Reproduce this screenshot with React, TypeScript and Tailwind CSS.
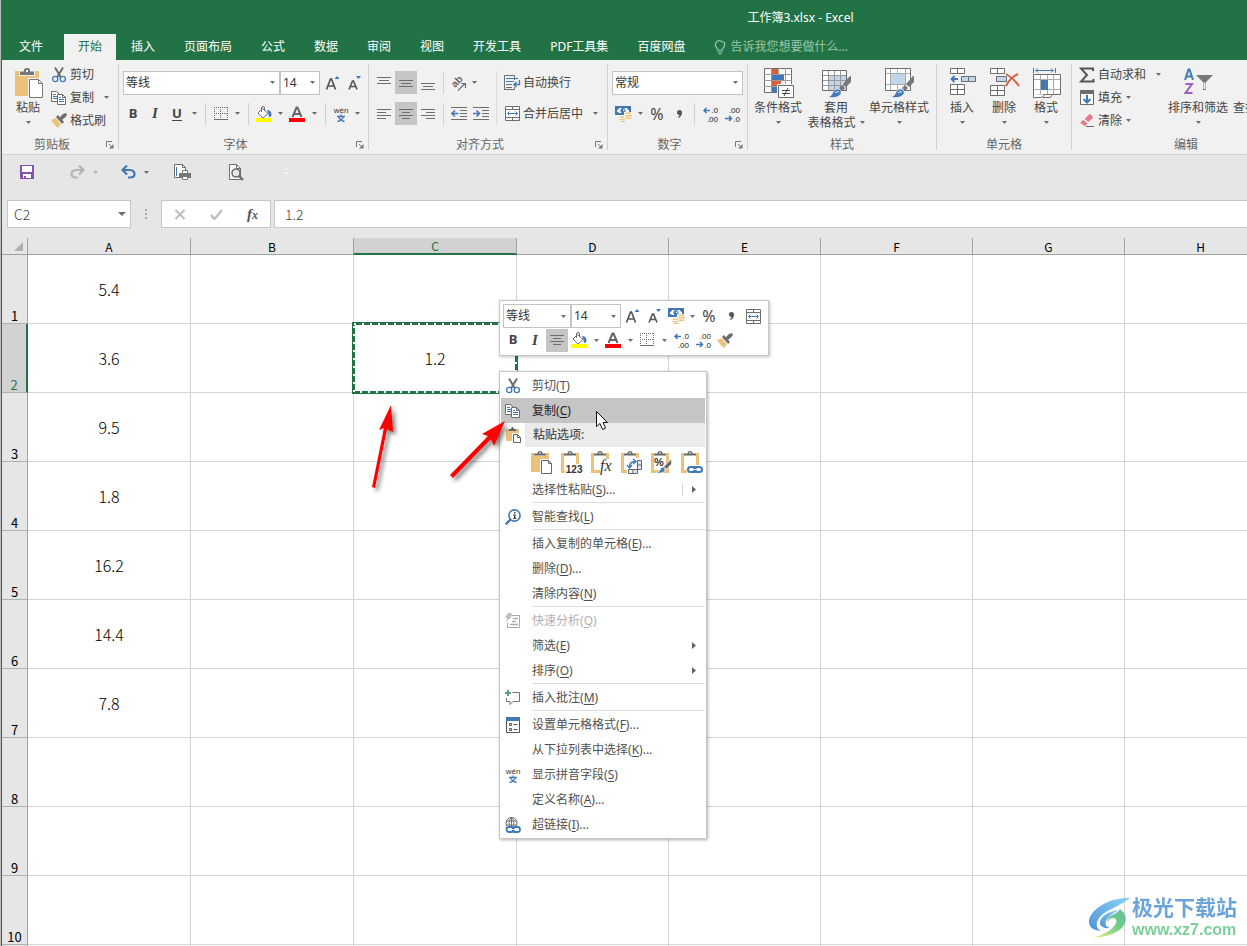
import React, { useState } from "react";

type Kids = { children?: React.ReactNode };

const GRAY = "#6d6d6d";
const BLUE = "#4178b5";
const TAN = "#ecc27b";

/* ---------- icons ---------- */

function Svg({ w, h, children }: { w: number; h: number } & Kids) {
  return (
    <svg width={w} height={h} viewBox={`0 0 ${w} ${h}`} fill="none" aria-hidden="true" className="shrink-0">
      {children}
    </svg>
  );
}

const Caret = ({ color = GRAY }: { color?: string }) => (
  <Svg w={5} h={3}>
    <path d="M0 0h5L2.500 3z" fill={color} />
  </Svg>
);

const PasteBig = () => (
  <Svg w={30} h={30}>
    <path d="M1 3h24v25H1z" fill={TAN} />
    <path d="M5 2h16v6H5z" fill="#f1f1f1" />
    <path d="M6 7V3.500h4V2q0-2 3-2t3 2v1.500h4V7z" fill="#777" />
    <path d="M12 2h2v2h-2z" fill="#f1f1f1" />
    <path d="M14 10h11l5 5v15H14z" fill="#f1f1f1" />
    <path d="M15.500 11.500h9l4 4v14h-13z" fill="#fff" stroke="#777" />
    <path d="M24.500 11.500v4h4" stroke="#777" />
  </Svg>
);

const Scissors = () => (
  <Svg w={16} h={16}>
    <path d="M4 .5l6 10M12 .5l-6 10" stroke={GRAY} strokeWidth="2" />
    <circle cx="4.200" cy="12" r="2.600" stroke={BLUE} strokeWidth="1.300" />
    <circle cx="11.800" cy="12" r="2.600" stroke={BLUE} strokeWidth="1.300" />
  </Svg>
);

const CopyIcon = () => (
  <Svg w={16} h={14}>
    <path d="M.5.5h5l3 3v7h-8z" fill="#fff" stroke={GRAY} />
    <path d="M2 3.500h3M2 5.500h4M2 7.500h4" stroke={BLUE} />
    <path d="M6.500 3.500h5l3 3v7h-8z" fill="#fff" stroke={GRAY} />
    <path d="M11.500 3.500v3h3" stroke={GRAY} />
    <path d="M8 6.500h2M8 8.500h5M8 10.500h5" stroke={BLUE} />
  </Svg>
);

const Brush = () => (
  <Svg w={16} h={15}>
    <path d="M0 7l5-2 5 6-3 4q-3-2-7-8z" fill={TAN} />
    <path d="M5 4l2-2 6 7-2 2z" fill={GRAY} />
    <path d="M8.500 4.500L12 1l3-1 1 2-1.500 2L11 7z" fill={GRAY} />
    <path d="M5.500 5.500l5 5.500" stroke="#f1f1f1" strokeWidth=".8" />
  </Svg>
);

const Launcher = () => (
  <Svg w={8} h={8}>
    <path d="M.5 6V.5H6M3 3l3 3" stroke="#777" />
    <path d="M7.500 3v4.500H3z" fill="#777" />
  </Svg>
);

const GrowFont = ({ down = false }: { down?: boolean }) => (
  <Svg w={16} h={16}>
    {down ? (
      <>
        <path d="M2 14.500L5.500 6h1L10 14.500M3.500 11.500h5" stroke="#555" strokeWidth="1.600" />
        <path d="M9 1h5l-2.500 3z" fill={BLUE} />
      </>
    ) : (
      <>
        <path d="M1.500 14.500L5.500 4h1l4 10.500M3 11h6" stroke="#555" strokeWidth="1.700" />
        <path d="M9.500 4h5L12 1z" fill={BLUE} />
      </>
    )}
  </Svg>
);

const Borders = () => (
  <Svg w={14} h={14}>
    <path
      d="M.5 0v12M13.500 0v12M6.500 0v12M0 .5h14M0 6.500h14"
      stroke={GRAY}
      strokeDasharray="1 1"
      shapeRendering="crispEdges"
    />
    <path d="M0 12.500h14" stroke={GRAY} shapeRendering="crispEdges" />
  </Svg>
);

const Bucket = () => (
  <Svg w={16} h={16}>
    <path d="M6.500 2.500l5.500 5L7 12 2 7z" fill="#fff" stroke={GRAY} />
    <path d="M5.500 6V2q0-1.500 1.500-1.500T8.500 2v3" stroke={GRAY} />
    <path d="M11 4q4 0 4.500 4 0 3-1.500 3-1.500 0-1.500-3z" fill={BLUE} />
    <path d="M0 12h16v4H0z" fill="#ff0" />
  </Svg>
);

const FontColor = () => (
  <Svg w={16} h={16}>
    <path d="M3.500 11L7.500 1.500h1l4 9.500M5 8h6" stroke="#666" strokeWidth="2" />
    <path d="M0 12h16v4H0z" fill="#f00" />
  </Svg>
);

const Wen = () => (
  <Svg w={18} h={18}>
    <text x="9" y="8" textAnchor="middle" fontSize="8" fill="#333" fontFamily="Liberation Sans">
      wén
    </text>
    <path d="M5 11.500h8M9 9.500v2M6.500 11.500q1.500 4 6 5M11.500 11.500q-1.500 4-6 5" stroke={BLUE} strokeWidth="1.300" />
  </Svg>
);

type AlignKind = "top" | "middle" | "bottom" | "left" | "center" | "right";
const ALIGN: Record<AlignKind, string> = {
  top: "M1 2.500h14M3 5.500h10M1 8.500h14",
  middle: "M1 5.500h14M3 8.500h10M1 11.500h14",
  bottom: "M1 8.500h14M3 11.500h10M1 14.500h14",
  left: "M1 3.500h14M1 6.500h9M1 9.500h14M1 12.500h9",
  center: "M1 3.500h14M4 6.500h8M1 9.500h14M4 12.500h8",
  right: "M1 3.500h14M6 6.500h9M1 9.500h14M6 12.500h9",
};
const Align = ({ kind }: { kind: AlignKind }) => (
  <Svg w={16} h={16}>
    <path d={ALIGN[kind]} stroke={GRAY} />
  </Svg>
);

const Orientation = () => (
  <Svg w={20} h={20}>
    <text x="7" y="15" transform="rotate(-45 7 15)" fontSize="10" fontWeight="700" fill="#666" fontFamily="Liberation Sans">
      ab
    </text>
    <path d="M10 17.500l7-7M13 10.500h4.500V15" stroke={GRAY} strokeWidth="1.200" />
  </Svg>
);

const Indent = ({ out = false }: { out?: boolean }) => (
  <Svg w={16} h={14}>
    <path d="M0 .5h16M9 3.500h7M9 6.500h7M9 9.500h7M0 12.500h16" stroke={GRAY} />
    {out ? (
      <path d="M7.500 6.500H1.500M4 3.500L1 6.500l3 3" stroke={BLUE} strokeWidth="1.600" />
    ) : (
      <path d="M0 6.500h6M3.500 3.500l3 3-3 3" stroke={BLUE} strokeWidth="1.600" />
    )}
  </Svg>
);

const WrapIcon = () => (
  <Svg w={17} h={16}>
    <path d="M.5 15V.5h10V5M.5 8.500v6h10V12" stroke={GRAY} />
    <path d="M2 3.500h12M2 6.500h8" stroke={BLUE} />
    <path d="M2 9.500h6M2 12.500h6" stroke={GRAY} />
    <path d="M15.500 5v4.500h-5M12.500 7l-2.500 2.500 2.500 2.500" stroke={BLUE} strokeWidth="1.300" />
  </Svg>
);

const MergeIcon = () => (
  <Svg w={15} h={15}>
    <path d="M.5.5h14v14H.5z" fill="#fff" stroke={GRAY} />
    <path d="M0 3.500h15M0 11.500h15M7.500 0v3.500M7.500 11.500V15" stroke={GRAY} />
    <path d="M2.500 7.500h10M4.500 5.500l-2 2 2 2M10.500 5.500l2 2-2 2" stroke={BLUE} />
  </Svg>
);

const Currency = () => (
  <Svg w={17} h={16}>
    <path d="M1 1h14v7H1z" fill="#fff" stroke={BLUE} strokeWidth="2" />
    <path d="M2 2h2v1H3v1H2zM12 2h2v2h-1V3h-1zM2 7V6h1.500v1z" fill={BLUE} />
    <circle cx="8" cy="4.500" r="2.600" fill={BLUE} />
    <path d="M8 3.500h1.500V5H8z" fill="#fff" />
    <path d="M9 6h8v8h-5v2H4v-6h5z" fill="#f8f8f8" />
    <path
      d="M10.500 6.500h5.500v1.500h-5.500zM10.500 9h6.500v1.500h-6.500zM10.500 11.500h6V13h-6zM5 10.500h4.500V12H5zM4.500 13h5.500v1H4.500zM5.500 14.800h5V16h-5z"
      fill={TAN}
    />
  </Svg>
);

const Decimal = ({ more = false }: { more?: boolean }) => (
  <Svg w={18} h={18}>
    <text x="17" y="8" textAnchor="end" fontSize="8" fill="#222" fontFamily="Liberation Sans">
      {more ? ".0" : ".00"}
    </text>
    <text x="17" y="17" textAnchor="end" fontSize="8" fill="#222" fontFamily="Liberation Sans">
      {more ? ".00" : ".0"}
    </text>
    {more ? (
      <path d="M9 5.500H3M5.500 3L3 5.500 5.500 8" stroke={BLUE} strokeWidth="1.500" />
    ) : (
      <path d="M2 13.500h6M6 11l2.500 2.500L6 16" stroke={BLUE} strokeWidth="1.500" />
    )}
  </Svg>
);

const CondFormat = () => (
  <Svg w={30} h={30}>
    <path d="M.5.500h27v24H.5z" fill="#fff" stroke={GRAY} />
    <path d="M0 6.500h28M0 12.500h28M0 18.500h28M7.500 0v25M14.500 0v25M21.500 0v25" stroke="#999" />
    <path d="M8 1h6v5H8zM8 13h9v5H8z" fill="#d9603b" />
    <path d="M8 7h12v5H8zM8 19h5v5H8z" fill={BLUE} />
    <path d="M13 16h17v14H13z" fill="#f1f1f1" />
    <path d="M14.500 17.500h15v12h-15z" fill="#fff" stroke={GRAY} />
    <path d="M18 22.500h8M18 25.500h8M24 20l-4 8" stroke="#444" />
  </Svg>
);

const PaintBrush = ({ x, y }: { x: number; y: number }) => (
  <g transform={`translate(${x} ${y})`}>
    <path d="M0 22q4-1 5-5 2-4 6-3 4 3 1 6-4 4-12 2z" fill={BLUE} stroke="#f1f1f1" strokeWidth=".8" />
    <path d="M11 13l3-3 3 3-3 3z" fill="#777" />
    <path d="M15 9l7-8 1 0v6l-5 5z" fill="#777" />
    <path d="M7 18q2-2 4-1" stroke="#fff" />
  </g>
);

const TableFormat = () => (
  <Svg w={30} h={30}>
    <path d="M.5 2.500h24v20H.5z" fill="#fff" stroke={GRAY} />
    <path d="M7 8h17v14H7z" fill="#c3d5ea" />
    <path d="M1 7.500h23M1 12.500h23M1 17.500h23M6.500 3v19M12.500 3v19M18.500 3v19" stroke="#999" />
    <PaintBrush x={6} y={7} />
  </Svg>
);

const CellStyle = () => (
  <Svg w={30} h={30}>
    <path d="M.5.500h25v22H.5z" fill="#fff" stroke={GRAY} />
    <path d="M1 5.500h24M1 16.500h24M5.500 1v21M20.500 1v21M12.500 1v4M12.500 17v5" stroke="#aaa" />
    <path d="M6 6h14v10H6z" fill="#c3d5ea" />
    <PaintBrush x={6} y={7} />
  </Svg>
);

const InsertCells = () => (
  <Svg w={28} h={30}>
    <path d="M1.500.500h14v5h-14zM8.500.500v5M1.500 16.500h14v10h-14zM8.500 16.500v10M1.500 21.500h14" fill="#fff" stroke={GRAY} />
    <path d="M12.500 8.500h14v5h-14zM19.500 8.500v5" fill="#c3d5ea" stroke={GRAY} />
    <path d="M9 11H3M5.500 8L2.500 11l3 3" stroke={BLUE} strokeWidth="1.800" />
  </Svg>
);

const DeleteCells = () => (
  <Svg w={30} h={30}>
    <path d="M.5.500h14v5H.5zM7.500.500v5M.5 17.500h14v10H.5zM7.500 17.500v10M.5 22.500h14" fill="#fff" stroke={GRAY} />
    <path d="M6.500 8.500h10v5h-10z" fill="#c3d5ea" stroke={GRAY} />
    <path d="M16 6q7 4 13 12M28 6q-8 4-12 12" stroke="#d9603b" strokeWidth="2" />
  </Svg>
);

const FormatCells = () => (
  <Svg w={28} h={32}>
    <path d="M.5 0v5M22.500 0v5M2 2.500h19M5 .5l-2 2 2 2M18 .5l2 2-2 2" stroke={BLUE} />
    <path d="M.5 6.500h27v20H.5z" fill="#fff" stroke={GRAY} />
    <path d="M1 11.500h26M1 21.500h26M7.500 7v19M14.500 7v19M20.500 7v19" stroke="#aaa" />
    <path d="M8 12h7v10H8z" fill={BLUE} />
    <path d="M.5 26v3.500h7q3 0 4-3M10 29.500h6q3 0 3-3" fill="#fff" stroke={GRAY} />
  </Svg>
);

const Sigma = () => (
  <Svg w={16} h={16}>
    <path d="M14 4V1.500H2L8 8l-6 6.500h12.500V12" stroke="#555" strokeWidth="2" />
  </Svg>
);

const FillDown = () => (
  <Svg w={14} h={16}>
    <path d="M.5.500h13v14H.5z" fill="#fff" stroke={GRAY} />
    <path d="M0 0h14v4H0z" fill={GRAY} />
    <path d="M7 5v7M3.500 9L7 12.500 10.500 9" stroke={BLUE} strokeWidth="2" />
  </Svg>
);

const Eraser = () => (
  <Svg w={14} h={14}>
    <path d="M4.500 5L9 .5q1-.8 2 0l1.500 2q.5 1 0 2L8.500 8z" fill="#e8798e" />
    <path d="M3.500 6l4 3.500L6 11.500q-1 1-2 0l-3-2q-1-1 0-2z" fill="#e8798e" />
    <path d="M6 12.500h8" stroke={GRAY} />
  </Svg>
);

const SortFilter = () => (
  <Svg w={30} h={28}>
    <path d="M1 12L4.500 1.500h1L9 12M2 8.500h6" stroke={BLUE} strokeWidth="2" />
    <path d="M1.500 16H8L1.500 25H8.500" stroke="#9b5fc0" strokeWidth="2" />
    <path d="M12 7h17l-7 7v8h-3v-8z" fill="#777" />
    <path d="M19.500 14.500h2V21h-2z" fill="#f1f1f1" />
  </Svg>
);

const FindIcon = () => (
  <Svg w={30} h={28}>
    <circle cx="18" cy="10" r="8" stroke={BLUE} strokeWidth="2" />
    <path d="M12 16l-9 9" stroke={GRAY} strokeWidth="3" />
  </Svg>
);

const Bulb = () => (
  <Svg w={12} h={15}>
    <path d="M3.500 10q0-1.500-1.500-3Q.5 4 2.500 2T6 .7 9.500 2 10 7q-1.500 1.500-1.500 3z" stroke="#9cc7ab" strokeWidth="1.200" />
    <path d="M3.500 12h5M4.500 14h3" stroke="#9cc7ab" strokeWidth="1.200" />
  </Svg>
);

const SaveIcon = () => (
  <Svg w={14} h={14}>
    <path d="M0 0h14v14H0z" fill="#8653ab" />
    <path d="M2 1h10v6H2zM3 9h8v4H3z" fill="#fff" />
    <path d="M4 11h2v2H4z" fill="#8653ab" />
  </Svg>
);

const Turn = ({ color, flip = false }: { color: string; flip?: boolean }) => (
  <Svg w={15} h={14}>
    <g transform={flip ? "translate(15 0) scale(-1 1)" : undefined}>
      <path d="M1.500 5H9q4.500.5 4.500 4T9 12.500H7" stroke={color} strokeWidth="2.200" />
      <path d="M6 .5L1.500 5 6 9.500" stroke={color} strokeWidth="2.200" />
    </g>
  </Svg>
);

const QuickPrint = () => (
  <Svg w={17} h={17}>
    <path d="M5 13.500H.5V.5h8l3 3V6" fill="#fff" stroke={GRAY} />
    <path d="M2.500 12V3" stroke={BLUE} />
    <path d="M8.500.5v3h3" stroke={GRAY} />
    <path d="M5 9h12v5H5z" fill="#777" />
    <path d="M8.500 6.500h5v3h-5zM8.500 12.500h5v3h-5z" fill="#fff" stroke="#777" />
  </Svg>
);

const Preview = () => (
  <Svg w={15} h={17}>
    <path d="M.5.5h7l4 4v11H.5z" fill="#fff" stroke={GRAY} />
    <path d="M7.500.5v4h4" stroke={GRAY} />
    <circle cx="7" cy="9" r="4" fill="#e6e6e6" stroke={GRAY} strokeWidth="1.600" />
    <path d="M10 12l4 4" stroke={GRAY} strokeWidth="2.400" />
  </Svg>
);

const PasteSmall = () => (
  <Svg w={16} h={16}>
    <path d="M1 2h13v12H1z" fill={TAN} />
    <path d="M3 1h9v3H3z" fill="#fff" />
    <path d="M3.500 4V2h2.500q0-2 1.500-2T9 2h2.500v2z" fill="#666" />
    <path d="M7 6h6l3 3v7H7z" fill="#fff" />
    <path d="M8.500 7.500h4l3 3v5h-7zM12.500 7.500v3h3" fill="#fff" stroke="#666" />
  </Svg>
);

type PasteKind = "all" | "values" | "formula" | "transpose" | "format" | "link";
function PasteOption({ kind }: { kind: PasteKind }) {
  return (
    <Svg w={22} h={24}>
      {kind === "all" ? (
        <path d="M0 2h18v19H0z" fill={TAN} />
      ) : (
        <path d="M1.500 3.500h15v17h-15z" fill="#fff" stroke={TAN} strokeWidth="3" />
      )}
      <path d="M3 1h12v4H3z" fill="#fff" />
      <path d="M3 4.500V2.500h3.500Q6.500 0 9 0t2.500 2.500H15v2z" fill="#666" />
      <path d="M8 1.500h2v1H8z" fill="#fff" />
      {kind === "all" && (
        <>
          <path d="M9 8h8l4 4v12H9z" fill="#fff" />
          <path d="M10.500 9.500h7l3 3v10h-10zM17.500 9.500v3h3" fill="#fff" stroke="#666" />
        </>
      )}
      {kind === "values" && (
        <>
          <path d="M4 13h18v11H4z" fill="#fff" />
          <text x="21.500" y="21.500" textAnchor="end" fontSize="10" fontWeight="700" fill="#333" fontFamily="Liberation Sans">
            123
          </text>
        </>
      )}
      {kind === "formula" && (
        <>
          <path d="M9 8h13v16H9z" fill="#fff" />
          <text x="9" y="20" fontSize="16" fontStyle="italic" fill="#333" fontFamily="Liberation Serif">
            fx
          </text>
        </>
      )}
      {kind === "transpose" && (
        <>
          <path d="M6 7h15v17H6z" fill="#fff" />
          <path d="M16.500 9.500h4v9h-4zM16.500 14h4M7.500 18.500h9v4h-9zM12 18.500v4" fill="#dde8f4" stroke="#666" />
          <path d="M8.500 16q0-5.500 5.500-5.500M6 14l2.500 3 2.500-3M12 8l3 2.500-3 2.500" stroke={BLUE} strokeWidth="1.400" />
        </>
      )}
      {kind === "format" && (
        <>
          <path d="M4 6h11v10H4z" fill="#fff" />
          <text x="3" y="15" fontSize="11" fontWeight="700" fill="#333" fontFamily="Liberation Sans">
            %
          </text>
          <path d="M5 22q4-1 5-5 2-2 4 0 1 6-9 5z" fill={BLUE} stroke="#fff" strokeWidth=".6" />
          <path d="M12.500 16l8-8v5l-5 5z" fill="#666" stroke="#fff" strokeWidth=".6" />
        </>
      )}
      {kind === "link" && (
        <>
          <path d="M6 14h16v10H6z" fill="#fff" />
          <rect x="7" y="16" width="8" height="5" rx="2.500" stroke={BLUE} strokeWidth="2" />
          <rect x="13" y="16" width="8" height="5" rx="2.500" stroke={BLUE} strokeWidth="2" />
          <path d="M11 18.500h6" stroke="#fff" strokeWidth="1" />
        </>
      )}
    </Svg>
  );
}

const SmartLookup = () => (
  <Svg w={16} h={16}>
    <circle cx="9.500" cy="6.500" r="5.600" fill="#fff" stroke={BLUE} strokeWidth="1.600" />
    <path d="M5.500 10.500L.8 15.200" stroke={BLUE} strokeWidth="2.400" />
    <path d="M9 3h1.500v1.500H9zM8 5.500h2.500V9h1v1H8V9h1V6.500H8z" fill="#444" />
  </Svg>
);

const QuickAnalysis = () => (
  <Svg w={16} h={16}>
    <path d="M5.500 2.500h9v12h-12v-5" stroke="#aaa" />
    <path d="M8 5.500h5M7 8.500h4M5 11.500h8" stroke="#aaa" strokeWidth="1.500" />
    <path d="M3 0h4L5 3.500h2L1 9l1.500-4H0z" fill="#bbb" />
  </Svg>
);

const Comment = () => (
  <Svg w={16} h={16}>
    <path d="M7.500 2.500h7v9H8l-3 3v-3H1.500V8" stroke="#777" />
    <path d="M3 0v6M0 3h6" stroke="#5b9c86" strokeWidth="2" />
  </Svg>
);

const FormatDialog = () => (
  <Svg w={14} h={16}>
    <path d="M.5.500h13v15H.5z" fill="#fff" stroke="#555" />
    <path d="M0 0h14v4H0z" fill={BLUE} />
    <path d="M3.500 6.500h2v2h-2zM3.500 11.500h2v2h-2z" stroke="#555" />
    <path d="M7.500 7.500h4M7.500 12.500h4" stroke="#555" />
  </Svg>
);

const Hyperlink = () => (
  <Svg w={16} h={16}>
    <circle cx="6.500" cy="6" r="5.500" stroke="#666" />
    <path d="M6.500.5v11M1 4h11M1 8h11M6.500.5q-5 5 0 11M6.500.5q5 5 0 11" stroke="#666" strokeWidth=".9" />
    <path d="M1 9h15v7H1z" fill="#fff" />
    <rect x="1.500" y="10" width="7.500" height="5" rx="2.500" stroke={BLUE} strokeWidth="1.800" />
    <rect x="7.500" y="10" width="7.500" height="5" rx="2.500" stroke={BLUE} strokeWidth="1.800" />
    <path d="M5 12.500h6" stroke="#fff" />
  </Svg>
);

/* ---------- ribbon parts ---------- */

function IconButton({
  label,
  active = false,
  width = "w-[22px]",
  children,
}: { label: string; active?: boolean; width?: string } & Kids) {
  return (
    <button
      type="button"
      aria-label={label}
      className={`flex h-[23px] shrink-0 items-center justify-center ${width} ${active ? "bg-[#c5c5c5]" : ""}`}
    >
      {children}
    </button>
  );
}

const CaretButton = ({ label }: { label: string }) => (
  <IconButton label={label} width="w-3">
    <Caret />
  </IconButton>
);

const Sep = ({ className = "mx-[5px]" }: { className?: string }) => (
  <span className={`h-[22px] w-px shrink-0 bg-[#d0d0d0] ${className}`} />
);

function Combo({ label, options, width }: { label: string; options: string[]; width: string }) {
  return (
    <div className={`grid h-6 shrink-0 items-center ${width}`}>
      <select
        aria-label={label}
        className="col-start-1 row-start-1 h-6 w-full appearance-none border border-[#c3c3c3] bg-white pl-0.5 text-[12px] text-[#333] outline-none"
      >
        {options.map((o) => (
          <option key={o}>{o}</option>
        ))}
      </select>
      <span className="pointer-events-none col-start-1 row-start-1 mr-[5px] justify-self-end">
        <Caret />
      </span>
    </div>
  );
}

function Group({
  title,
  width,
  launcher = false,
  children,
}: { title: string; width: string; launcher?: boolean } & Kids) {
  return (
    <section className={`flex shrink-0 ${width}`} aria-label={title}>
      <div className="flex min-w-0 flex-1 flex-col">
        <div className="flex h-[76px] items-start">{children}</div>
        <div className="flex h-[18px] items-center">
          <span className="flex-1 text-center text-[12px] leading-[18px] text-[#666]">{title}</span>
          {launcher && (
            <button type="button" aria-label={`${title}设置`} className="flex h-4 w-4 items-center justify-center">
              <Launcher />
            </button>
          )}
        </div>
      </div>
      <span className="my-1 w-px shrink-0 bg-[#d0d0d0]" />
    </section>
  );
}

function BigButton({
  icon,
  text,
  second,
  width,
}: {
  icon: React.ReactNode;
  text: string;
  second?: string;
  width: string;
}) {
  return (
    <button type="button" className={`flex shrink-0 flex-col items-center text-[12px] leading-[15px] text-[#444] ${width}`}>
      <span className="flex h-8 items-start justify-center pl-0.5">{icon}</span>
      <span className="whitespace-nowrap">{text}</span>
      <span className="flex h-[15px] items-center gap-1 whitespace-nowrap">
        {second}
        <Caret />
      </span>
    </button>
  );
}

function SmallButton({
  icon,
  text,
  caret = "none",
}: {
  icon: React.ReactNode;
  text: string;
  caret?: "none" | "near" | "far";
}) {
  return (
    <button type="button" className="flex h-[23px] items-center text-[12px] whitespace-nowrap text-[#444]">
      <span className="mr-0.5 flex w-[18px] justify-center">{icon}</span>
      {text}
      {caret !== "none" && (
        <span className={caret === "near" ? "ml-1" : "ml-2.5"}>
          <Caret />
        </span>
      )}
    </button>
  );
}

const Bold = () => <span className="text-[13px] font-bold text-[#444]">B</span>;
const Italic = () => (
  <span className="font-['Liberation_Serif',serif] text-[15px] font-bold text-[#444] italic">I</span>
);
const Percent = () => <span className="text-[16px] text-[#444]">%</span>;
const Comma = () => (
  <Svg w={5} h={8}>
    <path d="M0 2.500a2.500 2.500 0 0 1 5 0Q5 6 1.500 8L1 7q1.500-1 1.500-2Q0 5 0 2.500z" fill="#555" />
  </Svg>
);

function Ribbon() {
  return (
    <div className="flex overflow-hidden border-b border-[#d4d4d4] bg-[#f1f1f1]">
      <Group title="剪贴板" width="w-[117px]" launcher>
        <div className="flex pl-2.5">
          <div className="pt-2">
            <BigButton icon={<PasteBig />} text="粘贴" width="w-[32px]" />
          </div>
          <div className="flex flex-col items-start pt-[3px] pl-1.5">
            <SmallButton icon={<Scissors />} text="剪切" />
            <SmallButton icon={<CopyIcon />} text="复制" caret="far" />
            <SmallButton icon={<Brush />} text="格式刷" />
          </div>
        </div>
      </Group>

      <Group title="字体" width="w-[250px]" launcher>
        <div className="flex flex-col gap-2 pt-[11px] pl-[3px]">
          <div className="flex h-[23px] items-center pl-px">
            <Combo label="字体" options={["等线", "宋体"]} width="w-[157px]" />
            <Combo label="字号" options={["14", "12", "11"]} width="w-[40px]" />
            <span className="ml-0.5 flex">
              <IconButton label="增大字号">
                <GrowFont />
              </IconButton>
              <IconButton label="减小字号">
                <GrowFont down />
              </IconButton>
            </span>
          </div>
          <div className="flex h-[23px] items-center">
            <IconButton label="加粗">
              <Bold />
            </IconButton>
            <IconButton label="倾斜">
              <Italic />
            </IconButton>
            <IconButton label="下划线">
              <span className="border-b border-[#444] text-[13px] leading-[13px] font-bold text-[#444]">U</span>
            </IconButton>
            <CaretButton label="下划线选项" />
            <Sep />
            <IconButton label="边框" width="w-[20px]">
              <Borders />
            </IconButton>
            <CaretButton label="边框选项" />
            <Sep />
            <IconButton label="填充颜色" width="w-[20px]">
              <Bucket />
            </IconButton>
            <CaretButton label="填充颜色选项" />
            <IconButton label="字体颜色">
              <FontColor />
            </IconButton>
            <CaretButton label="字体颜色选项" />
            <Sep />
            <IconButton label="拼音" width="w-[20px]">
              <Wen />
            </IconButton>
            <CaretButton label="拼音选项" />
          </div>
        </div>
      </Group>

      <Group title="对齐方式" width="w-[239px]" launcher>
        <div className="flex pt-[11px] pl-1">
          <div className="flex flex-col gap-2">
            <div className="flex items-center">
              <IconButton label="顶端对齐">
                <Align kind="top" />
              </IconButton>
              <IconButton label="垂直居中" active>
                <Align kind="middle" />
              </IconButton>
              <IconButton label="底端对齐">
                <Align kind="bottom" />
              </IconButton>
              <Sep className="mx-1" />
              <IconButton label="方向" width="w-[20px]">
                <Orientation />
              </IconButton>
              <CaretButton label="方向选项" />
            </div>
            <div className="flex items-center">
              <IconButton label="左对齐">
                <Align kind="left" />
              </IconButton>
              <IconButton label="居中" active>
                <Align kind="center" />
              </IconButton>
              <IconButton label="右对齐">
                <Align kind="right" />
              </IconButton>
              <Sep className="mx-1" />
              <IconButton label="减少缩进量">
                <Indent out />
              </IconButton>
              <IconButton label="增加缩进量">
                <Indent />
              </IconButton>
            </div>
          </div>
          <span className="ml-1 w-px bg-[#dcdcdc]" />
          <div className="flex flex-col items-start gap-2 pl-1.5">
            <SmallButton icon={<WrapIcon />} text="自动换行" />
            <SmallButton icon={<MergeIcon />} text="合并后居中" caret="far" />
          </div>
        </div>
      </Group>

      <Group title="数字" width="w-[140px]" launcher>
        <div className="flex flex-col gap-2 pt-[11px] pl-1">
          <div className="flex h-[23px] items-center">
            <Combo label="数字格式" options={["常规", "数值"]} width="w-[131px]" />
          </div>
          <div className="flex items-center">
            <IconButton label="会计数字格式">
              <Currency />
            </IconButton>
            <CaretButton label="会计数字格式选项" />
            <IconButton label="百分比样式">
              <Percent />
            </IconButton>
            <IconButton label="千位分隔样式">
              <Comma />
            </IconButton>
            <Sep className="mx-1" />
            <IconButton label="增加小数位数">
              <Decimal more />
            </IconButton>
            <IconButton label="减少小数位数">
              <Decimal />
            </IconButton>
          </div>
        </div>
      </Group>

      <Group title="样式" width="w-[189px]">
        <div className="flex pt-2 pl-1">
          <BigButton icon={<CondFormat />} text="条件格式" width="w-[52px]" />
          <BigButton icon={<TableFormat />} text="套用" second="表格格式" width="w-[64px]" />
          <BigButton icon={<CellStyle />} text="单元格样式" width="w-[62px]" />
        </div>
      </Group>

      <Group title="单元格" width="w-[135px]">
        <div className="flex pt-2 pl-1">
          <BigButton icon={<InsertCells />} text="插入" width="w-[42px]" />
          <BigButton icon={<DeleteCells />} text="删除" width="w-[42px]" />
          <BigButton icon={<FormatCells />} text="格式" width="w-[42px]" />
        </div>
      </Group>

      <Group title="编辑" width="w-[229px]">
        <div className="flex pl-1.5">
          <div className="flex w-[88px] flex-col items-start pt-[3px]">
            <SmallButton icon={<Sigma />} text="自动求和" caret="far" />
            <SmallButton icon={<FillDown />} text="填充" caret="near" />
            <SmallButton icon={<Eraser />} text="清除" caret="near" />
          </div>
          <div className="flex pt-2">
            <BigButton icon={<SortFilter />} text="排序和筛选" width="w-[64px]" />
            <BigButton icon={<FindIcon />} text="查找和选择" width="w-[66px]" />
          </div>
        </div>
      </Group>
    </div>
  );
}

const TABS = ["开始", "插入", "页面布局", "公式", "数据", "审阅", "视图", "开发工具", "PDF工具集", "百度网盘"];

function TitleBar() {
  return (
    <header className="bg-[#217346] text-[12px] text-white">
      <h1 className="h-[34px] pl-[352px] text-center text-[12px] leading-9 font-normal">工作簿3.xlsx - Excel</h1>
      <nav className="flex h-[26px] items-stretch gap-px leading-6 whitespace-nowrap" aria-label="功能区">
        <button type="button" className="mr-[3px] w-[58px]">
          文件
        </button>
        {TABS.map((t) => (
          <button
            key={t}
            type="button"
            className={t === "开始" ? "bg-[#f1f1f1] px-3.5 text-[#217346]" : "px-3.5"}
          >
            {t}
          </button>
        ))}
        <label className="flex flex-1 items-center gap-1 pl-3.5">
          <Bulb />
          <input
            type="text"
            aria-label="操作说明搜索"
            placeholder="告诉我您想要做什么..."
            className="w-40 bg-transparent outline-none placeholder:text-[#9cc7ab]"
          />
        </label>
      </nav>
    </header>
  );
}

function QuickAccess() {
  return (
    <div className="flex h-[34px] items-center pl-3.5">
      <IconButton label="保存">
        <SaveIcon />
      </IconButton>
      <span className="ml-7 flex items-center">
        <IconButton label="恢复">
          <Turn color="#b4b4b4" flip />
        </IconButton>
        <IconButton label="恢复选项" width="w-[15px]">
          <Caret color="#b4b4b4" />
        </IconButton>
      </span>
      <span className="ml-[14px] flex items-center">
        <IconButton label="撤消">
          <Turn color={BLUE} />
        </IconButton>
        <IconButton label="撤消选项" width="w-[15px]">
          <Caret />
        </IconButton>
      </span>
      <span className="ml-[17px] flex items-center gap-8">
        <IconButton label="快速打印">
          <QuickPrint />
        </IconButton>
        <IconButton label="打印预览">
          <Preview />
        </IconButton>
      </span>
      <span className="ml-7 flex">
        <IconButton label="自定义快速访问工具栏">
          <Svg w={5} h={6}>
            <path d="M0 .5h5" stroke="#f6f6f6" />
            <path d="M0 3h5L2.500 6z" fill="#f6f6f6" />
          </Svg>
        </IconButton>
      </span>
    </div>
  );
}

function FormulaBar() {
  return (
    <div className="flex h-7 items-stretch pl-[5px] font-['Noto_Sans_CJK_SC',sans-serif] text-[14px] font-light text-[#444]">
      <div className="flex w-[124px] shrink-0 items-center border border-[#c6c6c6] bg-white pr-1">
        <input aria-label="名称框" defaultValue="C2" className="min-w-0 flex-1 pl-1.5 outline-none" />
        <Svg w={8} h={4}>
          <path d="M0 0h8L4 4z" fill={GRAY} />
        </Svg>
      </div>
      <div className="flex w-[30px] shrink-0 items-center justify-center">
        <Svg w={2} h={11}>
          <path d="M0 0h2v2H0zM0 4h2v2H0zM0 8h2v2H0z" fill="#aaa" />
        </Svg>
      </div>
      <div className="flex w-[110px] shrink-0 items-center justify-around border border-[#c6c6c6] bg-white">
        <button type="button" aria-label="取消">
          <Svg w={12} h={11}>
            <path d="M1.500 1l9 9M10.500 1l-9 9" stroke="#bdbdbd" strokeWidth="2" />
          </Svg>
        </button>
        <button type="button" aria-label="输入">
          <Svg w={13} h={11}>
            <path d="M1 6l3.500 4L12 1" stroke="#bdbdbd" strokeWidth="2.400" />
          </Svg>
        </button>
        <button
          type="button"
          aria-label="插入函数"
          className="font-['Liberation_Serif',serif] text-[15px] leading-4 font-bold text-[#555] italic"
        >
          f<span className="text-[12px]">x</span>
        </button>
      </div>
      <input
        aria-label="编辑栏"
        defaultValue="1.2"
        className="ml-[3px] min-w-0 flex-1 border border-r-0 border-[#c6c6c6] bg-white pl-2.5 outline-none"
      />
    </div>
  );
}

/* ---------- worksheet ---------- */

const COLUMNS = ["A", "B", "C", "D", "E", "F", "G", "H", "I"];
const COLUMN_A = ["5.4", "3.6", "9.5", "1.8", "16.2", "14.4", "7.8", "", "", "", ""];

function Sheet() {
  return (
    <table className="w-[1427px] table-fixed border-separate border-spacing-0 font-['Noto_Sans_CJK_SC',sans-serif] font-light text-black">
      <colgroup>
        <col className="w-[26px]" />
        {COLUMNS.map((c, i) => (
          <col key={c} className={i < 3 ? "w-[163px]" : "w-[152px]"} />
        ))}
      </colgroup>
      <thead>
        <tr className="h-[17px] text-[12px] leading-[14px]">
          <th className="border-r border-b border-[#a0a0a0] bg-[#e6e6e6] p-0">
            <span className="flex justify-end pr-1">
              <Svg w={9} h={9}>
                <path d="M9 0v9H0z" fill="#b1b1b1" />
              </Svg>
            </span>
          </th>
          {COLUMNS.map((c) => (
            <th
              key={c}
              scope="col"
              className={
                c === "C"
                  ? "border-r border-b-2 border-r-[#a0a0a0] border-b-[#217346] bg-[#d2d2d2] p-0 pt-px font-normal text-[#217346]"
                  : "border-r border-b border-[#a0a0a0] bg-[#e6e6e6] p-0 pt-px font-normal"
              }
            >
              {c}
            </th>
          ))}
        </tr>
      </thead>
      <tbody>
        {COLUMN_A.map((value, r) => (
          <tr key={r} className="h-[69px]">
            <th
              scope="row"
              className={
                r === 1
                  ? "border-r-2 border-b border-r-[#217346] border-b-[#b1b1b1] bg-[#d2d2d2] p-0 align-bottom text-[13px] leading-[14px] font-normal text-[#217346]"
                  : "border-r border-b border-r-[#a0a0a0] border-b-[#b1b1b1] bg-[#e6e6e6] p-0 align-bottom text-[13px] leading-[14px] font-normal"
              }
            >
              {r + 1}
            </th>
            {COLUMNS.map((c) => (
              <td key={c} className="relative border-r border-b border-[#d4d4d4] p-0 text-center text-[16px] leading-5">
                {c === "A" ? value : c === "C" && r === 1 ? "1.2" : ""}
                {c === "C" && r === 1 && (
                  <svg
                    className="absolute -top-0.5 -left-0.5 z-10"
                    width="166"
                    height="72"
                    fill="none"
                    shapeRendering="crispEdges"
                    aria-hidden="true"
                  >
                    <rect x="1.500" y="1.500" width="163" height="69" stroke="#217346" strokeWidth="3" />
                    <rect x="2" y="2" width="162" height="68" stroke="#fff" strokeWidth="2" strokeDasharray="2 6" />
                  </svg>
                )}
              </td>
            ))}
          </tr>
        ))}
      </tbody>
    </table>
  );
}

function MiniToolbar() {
  return (
    <div
      role="toolbar"
      aria-label="浮动工具栏"
      className="absolute top-[62px] left-[497px] z-20 w-[270px] border border-[#c6c6c6] bg-white py-[3px] pl-0.5 shadow-[1px_1px_3px_rgba(0,0,0,0.25)]"
    >
      <div className="flex h-6 items-center pl-px">
        <Combo label="字体" options={["等线", "宋体"]} width="w-[68px]" />
        <Combo label="字号" options={["14", "12"]} width="w-[50px]" />
        <span className="ml-px flex items-center">
          <IconButton label="增大字号">
            <GrowFont />
          </IconButton>
          <IconButton label="减小字号">
            <GrowFont down />
          </IconButton>
          <IconButton label="会计数字格式" width="w-[20px]">
            <Currency />
          </IconButton>
          <CaretButton label="会计数字格式选项" />
          <IconButton label="百分比样式">
            <Percent />
          </IconButton>
          <IconButton label="千位分隔样式">
            <Comma />
          </IconButton>
          <IconButton label="合并后居中">
            <MergeIcon />
          </IconButton>
        </span>
      </div>
      <div className="flex h-6 items-center">
        <IconButton label="加粗">
          <Bold />
        </IconButton>
        <IconButton label="倾斜">
          <Italic />
        </IconButton>
        <IconButton label="居中" active>
          <Align kind="center" />
        </IconButton>
        <IconButton label="填充颜色">
          <Bucket />
        </IconButton>
        <CaretButton label="填充颜色选项" />
        <IconButton label="字体颜色">
          <FontColor />
        </IconButton>
        <CaretButton label="字体颜色选项" />
        <IconButton label="边框">
          <Borders />
        </IconButton>
        <CaretButton label="边框选项" />
        <IconButton label="增加小数位数">
          <Decimal more />
        </IconButton>
        <IconButton label="减少小数位数">
          <Decimal />
        </IconButton>
        <IconButton label="格式刷">
          <Brush />
        </IconButton>
      </div>
    </div>
  );
}

function MenuItem({
  text,
  hotkey,
  more = false,
  icon,
  active = false,
  disabled = false,
  arrow = false,
  split = false,
}: {
  text: string;
  hotkey: string;
  more?: boolean;
  icon?: React.ReactNode;
  active?: boolean;
  disabled?: boolean;
  arrow?: boolean;
  split?: boolean;
}) {
  return (
    <button
      type="button"
      role="menuitem"
      disabled={disabled}
      className={`flex h-[25px] w-full items-center text-left ${
        active ? "bg-[#c5c5c5] text-[#222]" : disabled ? "text-[#b1b1b1]" : "text-[#505050]"
      }`}
    >
      <span className="flex w-6 justify-center">{icon}</span>
      <span className="flex-1 pl-[7px]">
        {text}(<span className="underline underline-offset-2">{hotkey}</span>){more ? "..." : ""}
      </span>
      {split && <span className="h-[13px] w-px bg-[#d8d8d8]" />}
      {arrow && (
        <span className="flex w-[22px] justify-center">
          <Svg w={4} h={7}>
            <path d="M0 0l4 3.500L0 7z" fill="#666" />
          </Svg>
        </span>
      )}
    </button>
  );
}

const Divider = () => (
  <div role="separator" className="ml-8 h-0.5">
    <div className="h-px bg-[#dcdcdc]" />
  </div>
);

const PASTE_KINDS: [PasteKind, string][] = [
  ["all", "粘贴"],
  ["values", "值"],
  ["formula", "公式"],
  ["transpose", "转置"],
  ["format", "格式"],
  ["link", "粘贴链接"],
];

function ContextMenu() {
  return (
    <div
      role="menu"
      aria-label="单元格菜单"
      className="absolute top-[133px] left-[497px] z-20 w-[208px] border border-[#c6c6c6] bg-white p-px text-[12px] shadow-[1px_1px_3px_rgba(0,0,0,0.3)]"
    >
      <MenuItem icon={<Scissors />} text="剪切" hotkey="T" />
      <MenuItem icon={<CopyIcon />} text="复制" hotkey="C" active />
      <div className="flex h-6 items-center text-[#505050]">
        <span className="flex w-6 justify-center">
          <PasteSmall />
        </span>
        <span className="h-6 flex-1 bg-[#ebebeb] pl-2 leading-6 font-medium">粘贴选项:</span>
      </div>
      <div className="flex h-[30px] items-end gap-2 pl-[30px] pb-0.5">
        {PASTE_KINDS.map(([kind, label]) => (
          <button key={kind} type="button" role="menuitem" aria-label={label}>
            <PasteOption kind={kind} />
          </button>
        ))}
      </div>
      <MenuItem text="选择性粘贴" hotkey="S" more arrow split />
      <Divider />
      <MenuItem icon={<SmartLookup />} text="智能查找" hotkey="L" />
      <Divider />
      <MenuItem text="插入复制的单元格" hotkey="E" more />
      <MenuItem text="删除" hotkey="D" more />
      <MenuItem text="清除内容" hotkey="N" />
      <Divider />
      <MenuItem icon={<QuickAnalysis />} text="快速分析" hotkey="Q" disabled />
      <MenuItem text="筛选" hotkey="E" arrow />
      <MenuItem text="排序" hotkey="O" arrow />
      <Divider />
      <MenuItem icon={<Comment />} text="插入批注" hotkey="M" />
      <Divider />
      <MenuItem icon={<FormatDialog />} text="设置单元格格式" hotkey="F" more />
      <MenuItem text="从下拉列表中选择" hotkey="K" more />
      <MenuItem icon={<Wen />} text="显示拼音字段" hotkey="S" />
      <MenuItem text="定义名称" hotkey="A" more />
      <MenuItem icon={<Hyperlink />} text="超链接" hotkey="I" more />
    </div>
  );
}

function Annotations() {
  return (
    <svg
      className="pointer-events-none absolute top-[157px] left-[358px] z-30"
      width="260"
      height="110"
      fill="none"
      aria-hidden="true"
    >
      <g className="drop-shadow-[3px_3px_2px_rgba(0,0,0,0.5)]">
        <path d="M31 10L19 35l5-2-12 59 3 1 12-59 6 3z" fill="#f00" />
        <path d="M145 26l-23 13 6 2-38 39 3 3 38-39 3 7z" fill="#f00" />
      </g>
      <path d="M236.500 16.500v15l3.500-3 2.500 6 3-1.500-2.500-5.500h4.500z" fill="#fff" stroke="#111" />
    </svg>
  );
}

function Watermark() {
  return (
    <div className="pointer-events-none absolute right-2.5 bottom-1 z-30 flex items-center opacity-90">
      <svg width="44" height="42" viewBox="0 0 44 42" fill="none" aria-hidden="true">
        <defs>
          <linearGradient id="sky" x1="0" y1="1" x2="1" y2="0">
            <stop offset="0" stopColor="#3f86d6" />
            <stop offset="1" stopColor="#7fd0f2" />
          </linearGradient>
          <linearGradient id="leaf" x1="0" y1="1" x2="1" y2="0">
            <stop offset="0" stopColor="#e9ee7a" />
            <stop offset=".6" stopColor="#63c878" />
            <stop offset="1" stopColor="#4bb5a0" />
          </linearGradient>
        </defs>
        <path d="M42 1C24 0 4 10 1 23q-1 10 12 11-7-4-3-11C15 13 32 10 42 1z" fill="url(#sky)" />
        <path d="M31 13C20 14 11 20 12 27q2 5 10 4-6-2-4-7 3-6 13-11z" fill="url(#sky)" />
        <path d="M32 12q9 7 4 16-7 11-31 13 16-5 22-13 4-7-3-7-4 1-4 5-2-5 4-8 6-2 8-6z" fill="url(#leaf)" />
      </svg>
      <div className="flex flex-col">
        <span className="font-['Noto_Sans_CJK_SC',sans-serif] text-[21px] leading-6 font-bold text-[#5b9bd9]">
          极光下载站
        </span>
        <span className="font-['Liberation_Sans',sans-serif] text-[16px] leading-6 font-bold text-[#6ccb8a]">
          www.xz7.com
        </span>
      </div>
    </div>
  );
}

export default function App() {
  const [menuOpen] = useState(true);
  return (
    <div className="relative flex h-screen overflow-hidden border-l border-[#bdbdbd] bg-white font-['Noto_Sans','Noto_Sans_CJK_SC',sans-serif]">
      <main className="flex min-w-0 flex-1 flex-col border-l border-[#217346]">
        <TitleBar />
        <Ribbon />
        <div className="bg-[#e6e6e6] pb-2.5">
          <QuickAccess />
          <div className="pt-[11px]">
            <FormulaBar />
          </div>
        </div>
        <div className="relative min-h-0 flex-1 overflow-hidden">
          <Sheet />
          <MiniToolbar />
          {menuOpen && <ContextMenu />}
          <Annotations />
        </div>
      </main>
      <Watermark />
    </div>
  );
}
